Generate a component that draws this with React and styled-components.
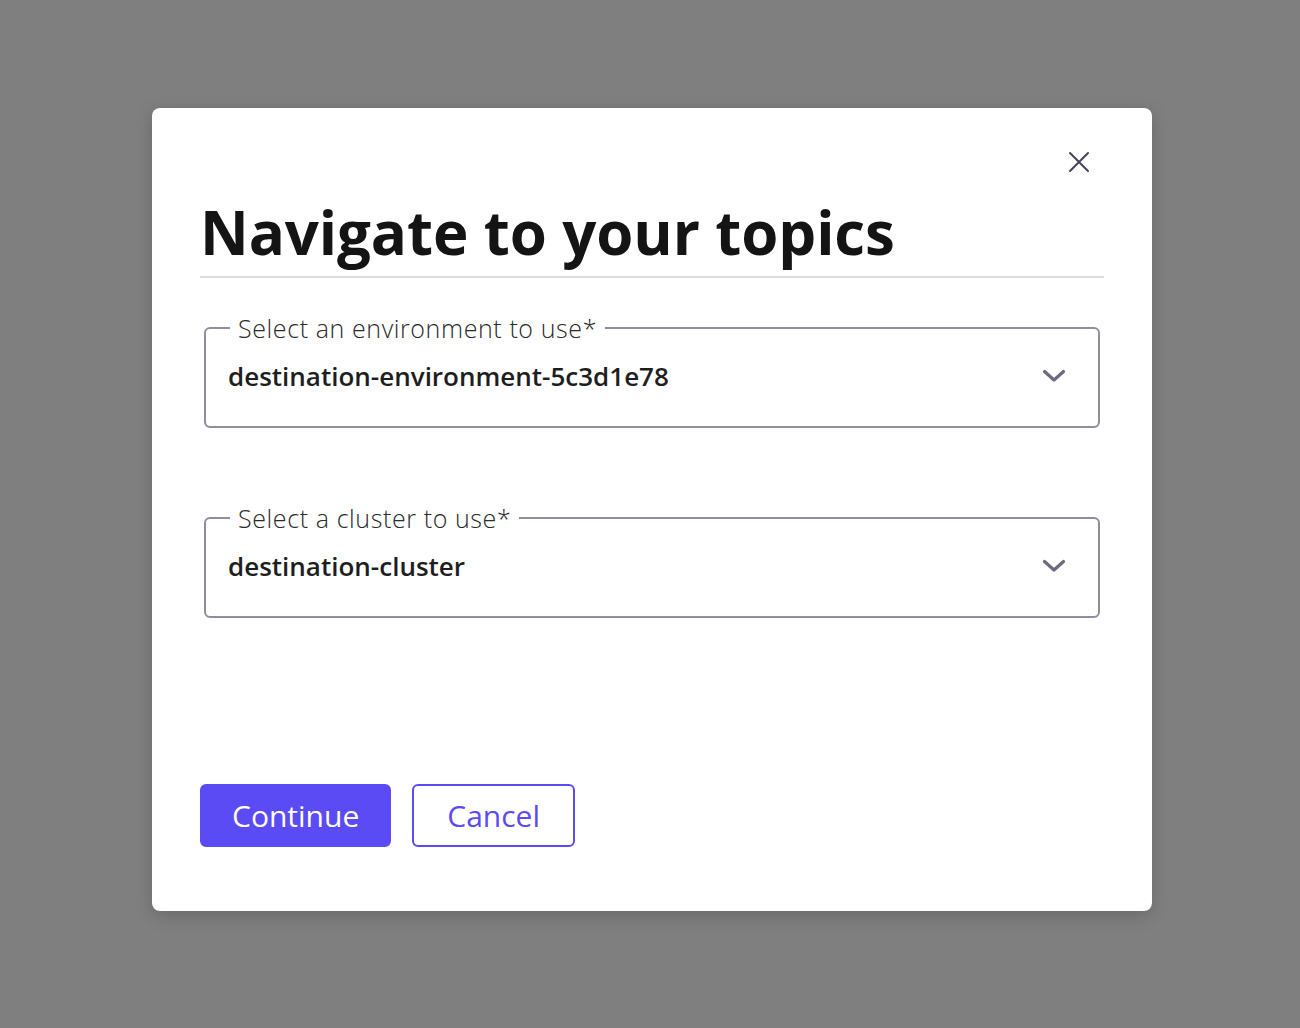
import React from 'react'
import styled, { createGlobalStyle } from 'styled-components';

const GlobalStyle = createGlobalStyle`
    html, body {
        margin: 0;
        padding: 0;
        background: #7f7f7f;
        font-family: 'Open Sans', 'Noto Sans', sans-serif;
    }
`;

const colors = {
    backdrop: '#7f7f7f',
    ink: '#141414',
    primary: '#5b4bf5',
    fieldBorder: '#8f8da0',
    chevron: '#6c6a80',
    divider: '#dcdce2',
};

const Backdrop = styled.div`
    width: 1300px;
    height: 1028px;
    padding: 108px 0 0 152px;
    box-sizing: border-box;
    background: ${colors.backdrop};
`;

const Modal = styled.div`
    width: 1000px;
    height: 803px;
    box-sizing: border-box;
    background: #fff;
    border-radius: 8px;
    box-shadow: 0 4px 18px rgba(0, 0, 0, 0.18);
    padding: 44px 48px 64px 48px;
    display: flex;
    flex-direction: column;
`;

const CloseRow = styled.div`
    display: flex;
    justify-content: flex-end;
    padding-right: 12px;
    height: 40px;
`;

const CloseButton = styled.button`
    border: none;
    background: none;
    padding: 0;
    width: 26px;
    height: 26px;
    margin-top: -3px;
    display: flex;
    align-items: center;
    justify-content: center;
    cursor: pointer;
`;

const Title = styled.h1`
    margin: 0;
    font-size: 60px;
    line-height: 80px;
    font-weight: 700;
    color: ${colors.ink};
    letter-spacing: -0.1px;
    padding-bottom: 4px;
    border-bottom: 2px solid ${colors.divider};
`;

const Fields = styled.div`
    display: flex;
    flex-direction: column;
    gap: 76px;
    padding: 0 4px;
    margin-top: 36px;
`;

const Field = styled.fieldset`
    margin: 0;
    padding: 0 32px 0 22px;
    border: 2px solid ${colors.fieldBorder};
    border-radius: 6px;
`;

const Legend = styled.legend`
    margin-left: 2px;
    padding: 0 8px;
    font-size: 25px;
    line-height: 28px;
    font-weight: 300;
    letter-spacing: 0.6px;
    color: #2a2a2a;
`;

const Row = styled.div`
    display: flex;
    align-items: center;
    justify-content: space-between;
    height: 68px;
    padding-bottom: 16px;
`;

const Value = styled.span`
    font-size: 26px;
    font-weight: 600;
    color: #1e1e1e;
`;

const Actions = styled.div`
    display: flex;
    gap: 21px;
    margin-top: auto;
`;

const Button = styled.button`
    height: 63px;
    padding: 0 ${p => (p.$primary ? 30 : 33)}px;
    border-radius: 6px;
    font-family: inherit;
    font-size: 30px;
    font-weight: 400;
    cursor: pointer;
    border: 2px solid ${colors.primary};
    background: ${p => (p.$primary ? colors.primary : '#fff')};
    color: ${p => (p.$primary ? '#fff' : colors.primary)};
`;

const Chevron = () => (
    <svg width="24" height="14" viewBox="0 0 24 14" fill="none">
        <path d="M2.5 2.5 L12 11 L21.5 2.5" stroke={colors.chevron} strokeWidth="3.2" strokeLinecap="round" strokeLinejoin="round" />
    </svg>
);

const CloseIcon = () => (
    <svg width="22" height="22" viewBox="0 0 22 22" fill="none">
        <path d="M2 2 L20 20 M20 2 L2 20" stroke="#45435a" strokeWidth="2" strokeLinecap="round" />
    </svg>
);

const SelectField = ({ label, value }) => (
    <Field>
        <Legend>{label}</Legend>
        <Row>
            <Value>{value}</Value>
            <Chevron />
        </Row>
    </Field>
);

const App = () => (
    <>
        <GlobalStyle />
        <Backdrop>
            <Modal>
                <CloseRow>
                    <CloseButton aria-label="Close"><CloseIcon /></CloseButton>
                </CloseRow>
                <Title>Navigate to your topics</Title>
                <Fields>
                    <SelectField label="Select an environment to use*" value="destination-environment-5c3d1e78" />
                    <SelectField label="Select a cluster to use*" value="destination-cluster" />
                </Fields>
                <Actions>
                    <Button $primary>Continue</Button>
                    <Button>Cancel</Button>
                </Actions>
            </Modal>
        </Backdrop>
    </>
);

export default App
